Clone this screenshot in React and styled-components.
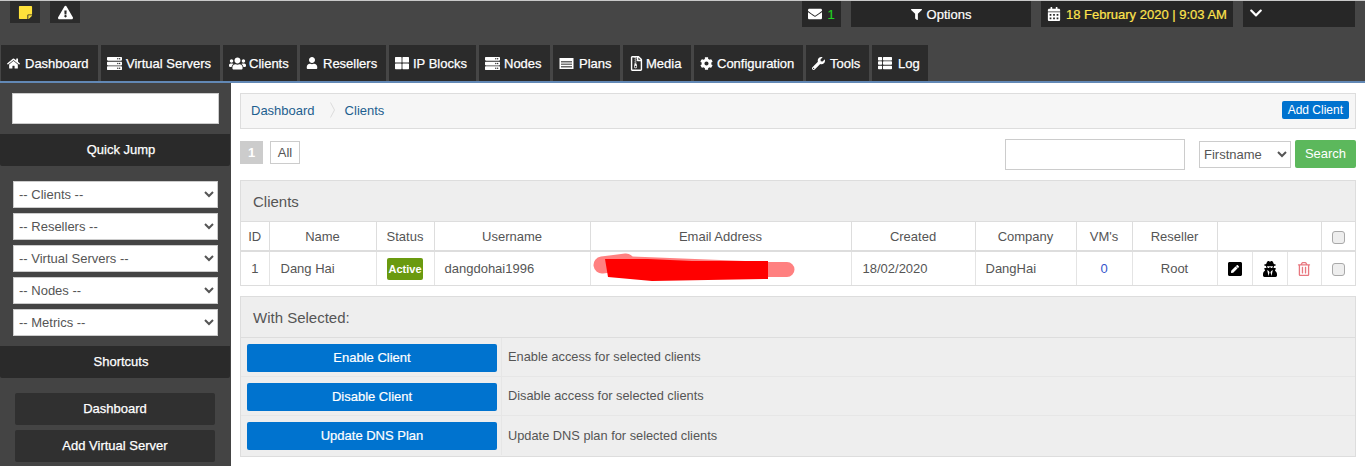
import styled, { createGlobalStyle } from "styled-components";
import {
  FaHome, FaServer, FaUsers, FaUser, FaThLarge, FaRegFileArchive, FaCog, FaWrench, FaThList,
  FaEnvelope, FaFilter, FaCalendarAlt, FaChevronDown, FaExclamationTriangle, FaStickyNote,
  FaUserSecret, FaPenSquare, FaRegTrashAlt,
} from "react-icons/fa";

function PlansIcon({ size }) {
  return (
    <svg width={size} height={size} viewBox="0 0 15 15" fill="none">
      <rect x="0.5" y="2" width="14" height="11" fill="#fff" />
      <rect x="2" y="5" width="11" height="1.5" fill="#666" />
      <rect x="2" y="7.5" width="11" height="1.5" fill="#777" />
      <rect x="2" y="10" width="11" height="1.5" fill="#666" />
    </svg>
  );
}

const tabs = [
  { label: "Dashboard", icon: FaHome, size: 13, width: 97, inset: 24 },
  { label: "Virtual Servers", icon: FaServer, size: 15, width: 119, inset: 25 },
  { label: "Clients", icon: FaUsers, size: 17, width: 74, inset: 26 },
  { label: "Resellers", icon: FaUser, size: 12, width: 86, inset: 23 },
  { label: "IP Blocks", icon: FaThLarge, size: 14, width: 87, inset: 24 },
  { label: "Nodes", icon: FaServer, size: 15, width: 71, inset: 25 },
  { label: "Plans", icon: PlansIcon, size: 15, width: 67, inset: 26 },
  { label: "Media", icon: FaRegFileArchive, size: 15, width: 68, inset: 23 },
  { label: "Configuration", icon: FaCog, size: 13, width: 109, inset: 23 },
  { label: "Tools", icon: FaWrench, size: 13, width: 63, inset: 24 },
  { label: "Log", icon: FaThList, size: 14, width: 56, inset: 26 },
];

const jumps = ["-- Clients --", "-- Resellers --", "-- Virtual Servers --", "-- Nodes --", "-- Metrics --"];

const actions = [
  { label: "Enable Client", text: "Enable access for selected clients" },
  { label: "Disable Client", text: "Disable access for selected clients" },
  { label: "Update DNS Plan", text: "Update DNS plan for selected clients" },
];

const headings = ["ID", "Name", "Status", "Username", "Email Address", "Created", "Company", "VM's", "Reseller"];
const columnWidths = [28, 107, 58, 156, 261, 124, 101, 56, 85, 35, 35, 34, 34];

function App() {
  return (
    <Page>
      <GlobalStyle />
      <TopBar>
        <TopRow>
          <Utility>
            <TinyButton><FaStickyNote color="#ffe23b" size={15} /></TinyButton>
            <TinyButton><FaExclamationTriangle color="#fff" size={15} /></TinyButton>
          </Utility>
          <Utility>
            <MailButton><FaEnvelope size={14} /><MailCount>1</MailCount></MailButton>
            <OptionsButton><FaFilter size={11} />Options</OptionsButton>
            <DateButton><FaCalendarAlt size={14} color="#fff" />18 February 2020 | 9:03 AM</DateButton>
            <MoreButton><FaChevronDown size={14} /></MoreButton>
          </Utility>
        </TopRow>
        <Tabs>
          {tabs.map(({ label, icon: Icon, size, width, inset }) => (
            <Tab key={label} $width={width}>
              <TabIcon $inset={inset}><Icon size={size} /></TabIcon>
              {label}
            </Tab>
          ))}
        </Tabs>
      </TopBar>

      <Body>
        <Sidebar>
          <SideSearch />
          <SideHeading>Quick Jump</SideHeading>
          <JumpList>
            {jumps.map((jump) => (
              <JumpSelect key={jump}><option>{jump}</option></JumpSelect>
            ))}
          </JumpList>
          <SideHeading>Shortcuts</SideHeading>
          <ShortcutList>
            <Shortcut>Dashboard</Shortcut>
            <Shortcut>Add Virtual Server</Shortcut>
          </ShortcutList>
        </Sidebar>

        <Main>
          <Breadcrumb>
            <Crumb>Dashboard</Crumb>
            <CrumbArrow width="5" height="16" viewBox="0 0 5 16" fill="none" stroke="#dcdcdc">
              <path d="M0.5 0.5l4 7.5-4 7.5" />
            </CrumbArrow>
            <Crumb>Clients</Crumb>
            <AddButton>Add Client</AddButton>
          </Breadcrumb>

          <Toolbar>
            <PageNumber>1</PageNumber>
            <PageAll>All</PageAll>
            <SearchInput />
            <FieldSelect><option>Firstname</option></FieldSelect>
            <SearchButton>Search</SearchButton>
          </Toolbar>

          <Panel>
            <PanelTitle>Clients</PanelTitle>
            <ClientTable>
              <colgroup>
                {columnWidths.map((width, i) => <col key={i} width={width} />)}
              </colgroup>
              <thead>
                <tr>
                  {headings.map((h) => <th key={h}>{h}</th>)}
                  <th colSpan={3} />
                  <th><Check type="checkbox" /></th>
                </tr>
              </thead>
              <tbody>
                <tr>
                  <Cell $center>1</Cell>
                  <Cell>Dang Hai</Cell>
                  <Cell $center><Badge>Active</Badge></Cell>
                  <Cell $pad={10}>dangdohai1996</Cell>
                  <RedactCell>
                    <svg width="204" height="33" viewBox="0 0 204 33" fill="none">
                      <path d="M10 13 L40 12 L176 17.5 L195 17.5" stroke="#ff8080" strokeWidth="15" strokeLinecap="round" strokeLinejoin="round" />
                      <path d="M10 13 L34 10" stroke="#ff8080" strokeWidth="17" strokeLinecap="round" />
                      <path d="M13 7 L56 7 L100 9 L176 9 L176 27 L60 29 L16 25 Z" fill="#ff0000" />
                    </svg>
                  </RedactCell>
                  <Cell>18/02/2020</Cell>
                  <Cell $pad={10}>DangHai</Cell>
                  <Cell $center><VmCount>0</VmCount></Cell>
                  <Cell $center>Root</Cell>
                  <IconCell><FaPenSquare size={16} color="#000" /></IconCell>
                  <IconCell><FaUserSecret size={16} color="#000" /></IconCell>
                  <IconCell><FaRegTrashAlt size={14} color="#e8777f" /></IconCell>
                  <IconCell><Check type="checkbox" /></IconCell>
                </tr>
              </tbody>
            </ClientTable>
          </Panel>

          <Panel>
            <PanelTitle>With Selected:</PanelTitle>
            <ActionList>
              {actions.map(({ label, text }) => (
                <ActionRow key={label}>
                  <ActionSlot><ActionButton>{label}</ActionButton></ActionSlot>
                  <ActionText>{text}</ActionText>
                </ActionRow>
              ))}
            </ActionList>
          </Panel>
        </Main>
      </Body>
    </Page>
  );
}

const GlobalStyle = createGlobalStyle`
  html, body {
    margin: 0;
    padding: 0;
    background: #fff;
    overflow: hidden;
  }

  body, input, select, button {
    font-family: "Liberation Sans", Arial, sans-serif;
    font-size: 13px;
  }

  * {
    box-sizing: border-box;
  }
`;

const Page = styled.div`
  width: 1365px;
  height: 466px;
  display: flex;
  flex-direction: column;
  overflow: hidden;
`;

const TopBar = styled.header`
  height: 83px;
  flex: none;
  display: flex;
  flex-direction: column;
  justify-content: space-between;
  background: #464646;
  border-top: 1px solid #c9c9c9;
  border-bottom: 2px solid #6288b5;
`;

const TopRow = styled.div`
  display: flex;
  justify-content: space-between;
  align-items: flex-start;
  padding: 0 10px;
`;

const Utility = styled.div`
  display: flex;
  align-items: flex-start;
`;

const TinyButton = styled.div`
  width: 30px;
  height: 22px;
  margin-right: 10px;
  display: flex;
  align-items: center;
  justify-content: center;
  background: #2b2b2b;
`;

const DarkButton = styled.div`
  height: 26px;
  display: flex;
  align-items: center;
  justify-content: center;
  gap: 5px;
  background: #272727;
  color: #fff;
  -webkit-text-stroke: 0.2px currentColor;
`;

const MailButton = styled(DarkButton)`
  width: 39px;
  margin-right: 10px;
`;

const MailCount = styled.span`
  color: #22d322;
`;

const OptionsButton = styled(DarkButton)`
  width: 180px;
  margin-right: 10px;
`;

const DateButton = styled(DarkButton)`
  width: 192px;
  margin-right: 10px;
  color: #ffe44d;
`;

const MoreButton = styled(DarkButton)`
  width: 112px;
  justify-content: flex-start;
  align-items: flex-start;
  padding: 5px 0 0 6px;
`;

const Tabs = styled.nav`
  display: flex;
  gap: 3px;
  padding-left: 1px;
`;

const Tab = styled.a`
  width: ${(p) => p.$width}px;
  height: 36px;
  padding-left: 6px;
  display: flex;
  align-items: center;
  background: #2b2b2b;
  color: #fff;
  white-space: nowrap;
  -webkit-text-stroke: 0.25px #fff;
`;

const TabIcon = styled.span`
  width: ${(p) => p.$inset - 6}px;
  flex: none;
  display: flex;
  align-items: center;
`;

const Body = styled.div`
  flex: 1;
  display: flex;
  min-height: 0;
`;

const Sidebar = styled.aside`
  width: 231px;
  flex: none;
  padding-top: 10px;
  background: #444;
`;

const SideSearch = styled.input`
  display: block;
  width: 207px;
  height: 31px;
  margin: 0 0 10px 12px;
  border: 1px solid #ccc;
  background: #fff;
`;

const SideHeading = styled.div`
  width: 230px;
  height: 32px;
  padding: 0 0 2px 12px;
  display: flex;
  align-items: center;
  justify-content: center;
  border-radius: 0 0 2px 2px;
  background: #2a2a2a;
  color: #fff;
  -webkit-text-stroke: 0.25px #fff;
`;

const JumpList = styled.div`
  padding: 15px 13px 10px;
  display: flex;
  flex-direction: column;
  gap: 5px;
`;

const JumpSelect = styled.select`
  width: 205px;
  height: 27px;
  padding-left: 1px;
  border: 1px solid #ccc;
  border-radius: 0;
  background: #fff;
  color: #555;
`;

const ShortcutList = styled.div`
  padding: 15px 15px 0;
  display: flex;
  flex-direction: column;
  gap: 5px;
`;

const Shortcut = styled.div`
  width: 200px;
  height: 32px;
  padding-bottom: 1px;
  display: flex;
  align-items: center;
  justify-content: center;
  border-radius: 2px;
  background: #303030;
  color: #fff;
  -webkit-text-stroke: 0.25px #fff;
`;

const Main = styled.main`
  flex: 1;
  min-width: 0;
  padding: 10px 9px 0;
  color: #555;
`;

const Breadcrumb = styled.div`
  height: 36px;
  padding: 0 6px 2px 10px;
  display: flex;
  align-items: center;
  border: 1px solid #ddd;
  background: #f6f6f6;
`;

const Crumb = styled.a`
  color: #1d5f8f;
`;

const CrumbArrow = styled.svg`
  margin: 0 10px 0 15px;
`;

const AddButton = styled.div`
  margin-left: auto;
  padding: 0 6px;
  height: 18px;
  line-height: 18px;
  border-radius: 2px;
  background: #0073cf;
  color: #fff;
  font-size: 12px;
`;

const Toolbar = styled.div`
  height: 51px;
  padding-top: 10px;
  display: flex;
  align-items: flex-start;
`;

const PageNumber = styled.span`
  width: 23px;
  height: 23px;
  margin-top: 2px;
  display: flex;
  align-items: center;
  justify-content: center;
  background: #ccc;
  color: #fff;
  font-weight: bold;
`;

const PageAll = styled.span`
  width: 30px;
  height: 23px;
  margin: 2px 0 0 7px;
  display: flex;
  align-items: center;
  justify-content: center;
  border: 1px solid #ccc;
`;

const SearchInput = styled.input`
  width: 180px;
  height: 31px;
  margin-left: auto;
  border: 1px solid #ccc;
  background: #fff;
`;

const FieldSelect = styled.select`
  width: 92px;
  height: 27px;
  margin: 2px 0 0 14px;
  border: 1px solid #ccc;
  border-radius: 0;
  background: #fff;
  color: #555;
`;

const SearchButton = styled.div`
  width: 61px;
  height: 28px;
  margin: 1px 0 0 4px;
  padding-bottom: 2px;
  display: flex;
  align-items: center;
  justify-content: center;
  border-radius: 2px;
  background: #5cb85c;
  color: #fff;
`;

const Panel = styled.section`
  margin-bottom: 10px;
  border: 1px solid #ddd;
`;

const PanelTitle = styled.div`
  height: 41px;
  padding-left: 12px;
  display: flex;
  align-items: center;
  border-bottom: 1px solid #ddd;
  background: #eee;
  color: #555;
  font-size: 15px;
`;

const ClientTable = styled.table`
  width: 100%;
  table-layout: fixed;
  border-collapse: collapse;

  th {
    height: 29px;
    padding: 0;
    border-left: 1px solid #ddd;
    border-bottom: 2px solid #ddd;
    font-weight: normal;
    text-align: center;
  }

  th:first-child, td:first-child {
    border-left: none;
  }
`;

const Cell = styled.td`
  height: 33px;
  padding: 0 0 0 ${(p) => (p.$center ? 0 : p.$pad || 11)}px;
  border-left: 1px solid #e4e4e4;
  text-align: ${(p) => (p.$center ? "center" : "left")};
`;

const IconCell = styled(Cell)`
  padding: 0;
  text-align: center;

  svg, input {
    vertical-align: middle;
  }
`;

const RedactCell = styled(Cell)`
  padding: 0 0 0 1px;

  svg {
    display: block;
  }
`;

const Badge = styled.span`
  display: inline-block;
  width: 36px;
  height: 22px;
  line-height: 22px;
  border-radius: 2px;
  background: #6a9a0f;
  color: #fff;
  font-size: 11px;
  font-weight: bold;
  vertical-align: middle;
`;

const VmCount = styled.a`
  color: #3355cc;
`;

const Check = styled.input`
  appearance: none;
  width: 13px;
  height: 13px;
  margin: 0;
  vertical-align: middle;
  border: 1px solid #a9a9a9;
  border-radius: 3px;
  background: #eee;
`;

const ActionList = styled.div`
  padding-bottom: 1px;
  display: flex;
  flex-direction: column;
  background: #eee;
`;

const ActionRow = styled.div`
  height: 39px;
  display: flex;
  align-items: center;
  border-bottom: 1px solid #e6e6e6;

  &:last-child {
    border-bottom: none;
  }
`;

const ActionSlot = styled.div`
  width: 261px;
  height: 100%;
  padding: 6px 0 5px 6px;
  display: flex;
  align-items: stretch;
  border-right: 1px solid #e6e6e6;
`;

const ActionButton = styled.div`
  width: 250px;
  height: 28px;
  padding-bottom: 1px;
  display: flex;
  align-items: center;
  justify-content: center;
  border-radius: 2px;
  background: #0073cf;
  color: #fff;
  -webkit-text-stroke: 0.2px #fff;
`;

const ActionText = styled.div`
  padding: 0 0 1px 6px;
  font-size: 12.8px;
`;

export default App;
